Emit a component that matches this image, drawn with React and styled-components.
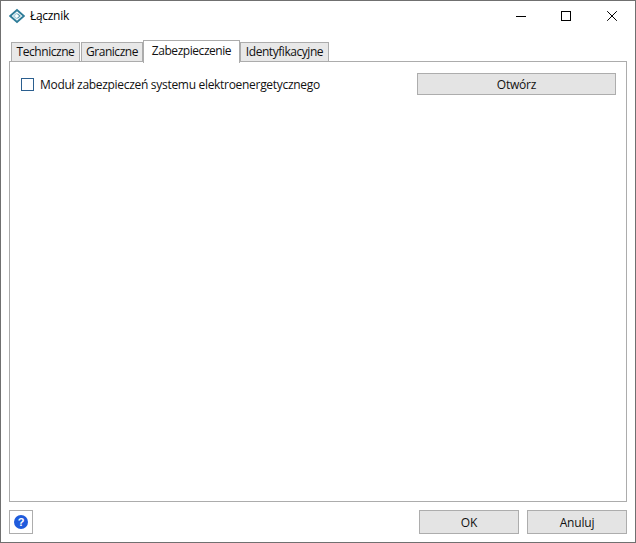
import React from "react";
import styled, { createGlobalStyle } from "styled-components";

const Global = createGlobalStyle`
  html, body { margin: 0; padding: 0; background: #fff; }
  body { width: 636px; height: 543px; overflow: hidden; }
`;

const Window = styled.div`
  box-sizing: border-box;
  width: 636px;
  height: 543px;
  border: 1px solid #707070;
  background: #fff;
  display: flex;
  flex-direction: column;
  font-family: "Open Sans", "Noto Sans", sans-serif;
  font-size: 12px;
  color: #000;
`;

const TitleBar = styled.div`
  height: 30px;
  display: flex;
  align-items: center;
  padding-left: 8px;
  flex: none;
`;

const AppIcon = styled.svg`
  width: 16px;
  height: 16px;
  flex: none;
`;

const Title = styled.span`
  margin-left: 5px;
  font-size: 12px;
  letter-spacing: -0.3px;
  position: relative;
  top: -1px;
`;

const Controls = styled.div`
  margin-left: auto;
  display: flex;
  height: 30px;
`;

const ControlButton = styled.div`
  width: ${(p) => p.$w}px;
  height: 30px;
  display: flex;
  align-items: center;
  justify-content: center;
`;

const Body = styled.div`
  flex: 1;
  display: flex;
  flex-direction: column;
  padding: 8px;
  min-height: 0;
`;

const TabStrip = styled.div`
  display: flex;
  align-items: flex-end;
  height: 23px;
  padding-left: 2px;
  position: relative;
  z-index: 1;
  flex: none;
`;

const Tab = styled.div`
  box-sizing: border-box;
  height: ${(p) => (p.$active ? "23px" : "20px")};
  width: ${(p) => p.$w}px;
  margin-left: ${(p) => p.$ml || 0}px;
  margin-bottom: ${(p) => (p.$active ? "-1px" : "0")};
  padding-bottom: ${(p) => (p.$active ? "3px" : "1px")};
  border: 1px solid #acacac;
  border-bottom: ${(p) => (p.$active ? "none" : "1px solid #acacac")};
  background: ${(p) => (p.$active ? "#fff" : "#e8e8e8")};
  display: flex;
  align-items: center;
  justify-content: center;
  white-space: nowrap;
  letter-spacing: -0.45px;
  color: #111;
`;

const Panel = styled.div`
  flex: 1;
  box-sizing: border-box;
  width: 618px;
  border: 1px solid #acacac;
  margin-top: -1px;
  padding: 11px 10px 0 11px;
  min-height: 0;
`;

const OptionRow = styled.div`
  display: flex;
  align-items: center;
  height: 22px;
`;

const Checkbox = styled.span`
  box-sizing: border-box;
  width: 13px;
  height: 13px;
  border: 1px solid #2b5f8f;
  flex: none;
  background: #fff;
`;

const OptionLabel = styled.span`
  margin-left: 6px;
  letter-spacing: -0.3px;
  color: #111;
`;

const Button = styled.div`
  box-sizing: border-box;
  height: ${(p) => p.$h || 24}px;
  width: ${(p) => p.$w}px;
  border: 1px solid #adadad;
  background: #e4e4e4;
  display: flex;
  align-items: center;
  justify-content: center;
  color: #111;
  letter-spacing: -0.2px;
  flex: none;
`;

const OpenButton = styled(Button)`
  margin-left: auto;
`;

const Footer = styled.div`
  display: flex;
  align-items: center;
  margin-top: 8px;
  flex: none;
  width: 618px;
  gap: 8px;
`;

const HelpButton = styled.div`
  box-sizing: border-box;
  width: 24px;
  height: 24px;
  border: 1px solid #adadad;
  display: flex;
  align-items: center;
  justify-content: center;
  margin-right: auto;
`;

function Logo() {
  return (
    <AppIcon viewBox="0 0 16 16" fill="none">
      <path d="M1.2 8 8 2 14.8 8 8 14Z" stroke="#2f7d99" strokeWidth="1.8" />
      <path d="M8 5 4.7 8 8 11" stroke="#a9d2df" strokeWidth="1.2" />
      <path d="M8.4 5.6 11 8 8.4 10.4" stroke="#5b9db3" strokeWidth="1.2" />
    </AppIcon>
  );
}

export default function App() {
  return (
    <>
      <Global />
      <Window>
        <TitleBar>
          <Logo />
          <Title>Łącznik</Title>
          <Controls>
            <ControlButton $w={44}>
              <svg width="10" height="10" viewBox="0 0 10 10"><path d="M0 5.5H10" stroke="#000" /></svg>
            </ControlButton>
            <ControlButton $w={46}>
              <svg width="10" height="10" viewBox="0 0 10 10"><rect x=".5" y=".5" width="9" height="9" fill="none" stroke="#000" /></svg>
            </ControlButton>
            <ControlButton $w={46}>
              <svg width="10" height="10" viewBox="0 0 10 10"><path d="M.2.2 9.8 9.8M9.8.2 .2 9.8" stroke="#000" strokeWidth="1" /></svg>
            </ControlButton>
          </Controls>
        </TitleBar>
        <Body>
          <TabStrip>
            <Tab $w={69}>Techniczne</Tab>
            <Tab $w={62} $ml={1}>Graniczne</Tab>
            <Tab $w={97} $active>Zabezpieczenie</Tab>
            <Tab $w={89}>Identyfikacyjne</Tab>
          </TabStrip>
          <Panel>
            <OptionRow>
              <Checkbox />
              <OptionLabel>Moduł zabezpieczeń systemu elektroenergetycznego</OptionLabel>
              <OpenButton $w={199} $h={22}>Otwórz</OpenButton>
            </OptionRow>
          </Panel>
          <Footer>
            <HelpButton>
              <svg width="14" height="14" viewBox="0 0 14 14">
                <circle cx="7" cy="7" r="7" fill="#1f5bdc" />
                <text x="7" y="11" textAnchor="middle" fontSize="11" fontWeight="700" fill="#fff" fontFamily="Liberation Sans, sans-serif">?</text>
              </svg>
            </HelpButton>
            <Button $w={100}>OK</Button>
            <Button $w={100}>Anuluj</Button>
          </Footer>
        </Body>
      </Window>
    </>
  );
}
